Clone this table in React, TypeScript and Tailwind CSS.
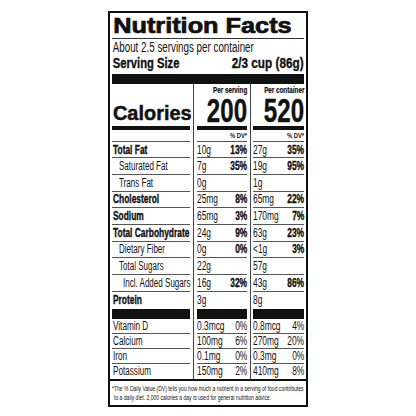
import React from "react";

type Row = {
  name: string;
  bold?: boolean;
  indent?: number;
  s1: string;
  d1?: string;
  s2: string;
  d2?: string;
};

const rows: Row[] = [
  { name: "Total Fat", bold: true, s1: "10g", d1: "13%", s2: "27g", d2: "35%" },
  { name: "Saturated Fat", indent: 1, s1: "7g", d1: "35%", s2: "19g", d2: "95%" },
  { name: "Trans Fat", indent: 1, s1: "0g", s2: "1g" },
  { name: "Cholesterol", bold: true, s1: "25mg", d1: "8%", s2: "65mg", d2: "22%" },
  { name: "Sodium", bold: true, s1: "65mg", d1: "3%", s2: "170mg", d2: "7%" },
  { name: "Total Carbohydrate", bold: true, s1: "24g", d1: "9%", s2: "63g", d2: "23%" },
  { name: "Dietary Fiber", indent: 1, s1: "0g", d1: "0%", s2: "<1g", d2: "3%" },
  { name: "Total Sugars", indent: 1, s1: "22g", s2: "57g" },
  { name: "Incl. Added Sugars", indent: 2, s1: "16g", d1: "32%", s2: "43g", d2: "86%" },
];

const minerals = [
  { name: "Vitamin D", s1: "0.3mcg", d1: "0%", s2: "0.8mcg", d2: "4%" },
  { name: "Calcium", s1: "100mg", d1: "6%", s2: "270mg", d2: "20%" },
  { name: "Iron", s1: "0.1mg", d1: "0%", s2: "0.3mg", d2: "0%" },
  { name: "Potassium", s1: "150mg", d1: "2%", s2: "410mg", d2: "8%" },
];

const heavy = "font-bold [-webkit-text-stroke:0.35px_#111]";

// condensed text: Liberation Sans squeezed horizontally
const T = ({ children, className }: { children: React.ReactNode; className: string }) => (
  <span className={"inline-block whitespace-nowrap " + className}>{children}</span>
);

// value on the left, % DV on the right; zero-width boxes so nothing pushes out of the column
const Pair = ({ left, right, rightBold }: { left: string; right?: string; rightBold: boolean }) => (
  <>
    <div className="w-0 shrink-0 flex justify-start">
      <T className="scale-x-[0.7] origin-left">{left}</T>
    </div>
    <div className="w-0 shrink-0 flex justify-end">
      <T className={"scale-x-[0.7] origin-right " + (rightBold ? heavy : "")}>{right}</T>
    </div>
  </>
);

const ValueColumn = ({ head, big, side }: { head: string; big: string; side: 1 | 2 }) => (
  <div className="flex flex-col">
    <div className="h-[12px] flex justify-end leading-[12px] text-[8.5px] font-bold [-webkit-text-stroke:0.2px_#111]">
      <T className="scale-x-[0.74] origin-right">{head}</T>
    </div>
    <div className="h-[30px] flex justify-end leading-[30px] text-[33px] font-bold [-webkit-text-stroke:0.4px_#111]">
      <T className="scale-x-[0.73] origin-right">{big}</T>
    </div>
    <div className="h-[4px] bg-[#111]" />
    <div className="h-[11.7px] flex justify-end items-start pt-[1px] leading-[10px] text-[6.5px] font-bold border-b border-[#555]">
      <T className="scale-x-[0.9] origin-right">% DV*</T>
    </div>
    {rows.map((r) => (
      <div
        key={r.name}
        className="h-[16.67px] flex items-center justify-between border-b border-[#555] text-[12px] leading-[14px]"
      >
        <Pair left={side === 1 ? r.s1 : r.s2} right={side === 1 ? r.d1 : r.d2} rightBold />
      </div>
    ))}
    <div className="h-[16.67px] mb-[0.6px] flex items-center justify-between text-[12px] leading-[14px]">
      <Pair left={side === 1 ? "3g" : "8g"} rightBold />
    </div>
    <div className="h-[10px] bg-[#111]" />
    {minerals.map((m, i) => (
      <div
        key={m.name}
        className={
          "h-[15px] flex items-center justify-between text-[12px] leading-[14px] " +
          (i < 3 ? "border-b border-[#555]" : "")
        }
      >
        <Pair left={side === 1 ? m.s1 : m.s2} right={side === 1 ? m.d1 : m.d2} rightBold={false} />
      </div>
    ))}
  </div>
);

export default function App() {
  return (
    <div className="min-h-screen bg-white font-['Liberation_Sans',Arial,sans-serif] text-[#111]">
      <div className="pt-[11px] pl-[108px]">
        <div className="w-[200px] border-2 border-[#111] bg-white">
          {/* header */}
          <div className="px-[2px]">
            <div className="h-[26px] border-b border-[#333] text-[22px] leading-[26px] font-bold">
              <T className="scale-x-[1.15] origin-left pl-[1px] [-webkit-text-stroke:0.7px_#111]">
                Nutrition Facts
              </T>
            </div>
            <div className="h-[16px] text-[14px] leading-[16px]">
              <T className="scale-x-[0.7] origin-left pl-[1px]">About 2.5 servings per container</T>
            </div>
            <div className="h-[16px] flex justify-between text-[14px] leading-[16px] font-bold [-webkit-text-stroke:0.35px_#111]">
              <T className="scale-x-[0.8] origin-left pl-[1px]">Serving Size</T>
              <T className="scale-x-[0.84] origin-right">2/3 cup (86g)</T>
            </div>
            <div className="mt-[3px] h-[10px] bg-[#111]" />
          </div>

          {/* columns */}
          <div className="flex px-[2px]">
            <div className="w-[78px] flex flex-col">
              <div className="h-[42px] flex items-end pb-[3px] text-[21px] leading-[21px] font-bold">
                <T className="scale-x-[0.95] origin-left pl-[1px] [-webkit-text-stroke:0.5px_#111]">
                  Calories
                </T>
              </div>
              <div className="h-[4px] bg-[#111]" />
              <div className="h-[11.7px] border-b border-[#555]" />
              {rows.map((r) => (
                <div
                  key={r.name}
                  className={
                    "h-[16.67px] flex items-center border-b border-[#555] text-[12px] leading-[14px] " +
                    (r.indent === 1 ? "pl-[7px]" : r.indent === 2 ? "pl-[11px]" : "pl-[1px]")
                  }
                >
                  <T className={r.bold ? "scale-x-[0.7] origin-left " + heavy : "scale-x-[0.67] origin-left"}>
                    {r.name}
                  </T>
                </div>
              ))}
              <div className="h-[16.67px] mb-[0.6px] flex items-center pl-[1px] text-[12px] leading-[14px]">
                <T className={"scale-x-[0.7] origin-left " + heavy}>Protein</T>
              </div>
              <div className="h-[10px] bg-[#111]" />
              {minerals.map((m, i) => (
                <div
                  key={m.name}
                  className={
                    "h-[15px] flex items-center pl-[1px] text-[12px] leading-[14px] " +
                    (i < 3 ? "border-b border-[#555]" : "")
                  }
                >
                  <T className="scale-x-[0.68] origin-left">{m.name}</T>
                </div>
              ))}
            </div>
            <div className="ml-[3px] w-px bg-[#444]" />
            <div className="ml-[3px] w-[50px]">
              <ValueColumn head="Per serving" big="200" side={1} />
            </div>
            <div className="ml-[3px] w-px bg-[#444]" />
            <div className="ml-[2px] w-[51px]">
              <ValueColumn head="Per container" big="520" side={2} />
            </div>
          </div>

          {/* footnote */}
          <div className="border-t-2 border-[#111] pt-[3px] pb-[2px] px-[2px] text-[7px] leading-[9.5px]">
            <div>
              <T className="scale-x-[0.72] origin-left">
                *The % Daily Value (DV) tells you how much a nutrient in a serving of food contributes
              </T>
            </div>
            <div className="pl-[2px]">
              <T className="scale-x-[0.72] origin-left">
                to a daily diet. 2,000 calories a day is used for general nutrition advice.
              </T>
            </div>
          </div>
        </div>
      </div>
    </div>
  );
}
